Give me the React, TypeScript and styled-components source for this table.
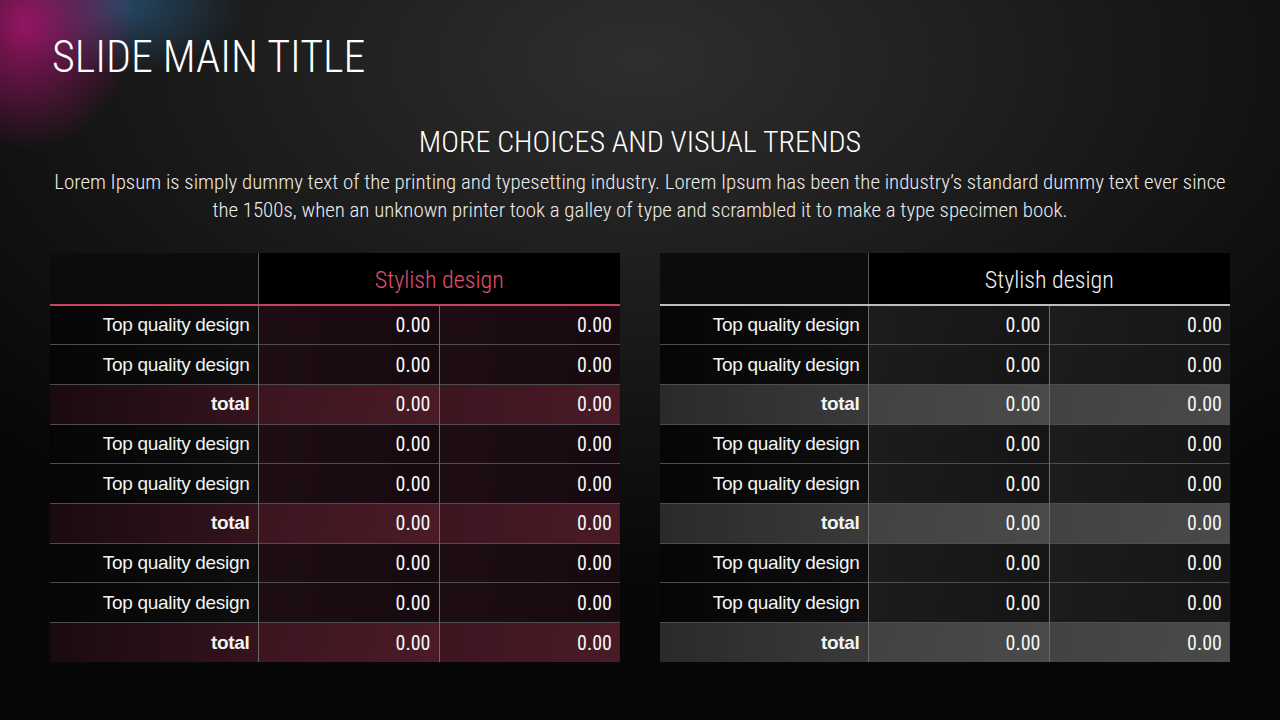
import styled, { createGlobalStyle } from 'styled-components';

type Variant = 'pink' | 'grey';
type RowKind = 'item' | 'total';

const rows: RowKind[] = [
  'item',
  'item',
  'total',
  'item',
  'item',
  'total',
  'item',
  'item',
  'total',
];

const GlobalStyle = createGlobalStyle`
  html, body {
    margin: 0;
    padding: 0;
    background: #050505;
  }
  * {
    box-sizing: border-box;
  }
`;

const condensed = `'Roboto Condensed', 'Roboto', sans-serif`;

const Slide = styled.div`
  position: relative;
  width: 1280px;
  height: 720px;
  overflow: hidden;
  color: #f2f2f2;
  background:
    radial-gradient(ellipse 110px 125px at 25px 25px, rgba(170, 20, 110, 0.85), rgba(170, 20, 110, 0) 100%),
    radial-gradient(ellipse 125px 70px at 120px 5px, rgba(40, 85, 120, 0.8), rgba(40, 85, 120, 0) 100%),
    radial-gradient(ellipse 900px 520px at 640px 60px, #2e2e2e 0%, #1c1c1c 45%, #070707 100%);
`;

const Title = styled.h1`
  margin: 0;
  padding: 30px 0 0 52px;
  font-family: ${condensed};
  font-stretch: condensed;
  font-weight: 300;
  font-size: 44px;
  line-height: 54px;
  color: #ffffff;
`;

const Intro = styled.section`
  display: flex;
  flex-direction: column;
  align-items: center;
  padding: 40px 20px 0;
  text-align: center;
`;

const Subtitle = styled.h2`
  margin: 0;
  font-family: ${condensed};
  font-stretch: condensed;
  font-weight: 300;
  font-size: 30px;
  line-height: 36px;
  color: #ffffff;
`;

const Body = styled.p`
  margin: 8px 0 0;
  font-family: ${condensed};
  font-stretch: condensed;
  font-weight: 300;
  font-size: 20.9px;
  line-height: 28px;
  color: #ececec;
  white-space: nowrap;
`;

const Tables = styled.div`
  display: flex;
  gap: 40px;
  padding: 29px 50px 0;
`;

const Table = styled.table`
  width: 570px;
  border-collapse: collapse;
  table-layout: fixed;
`;

const HeadBlank = styled.th`
  height: 52px;
  padding: 0;
  background: #0c0c0c;
  border-right: 1px solid #555;
`;

const HeadTitle = styled.th<{ $variant: Variant }>`
  height: 52px;
  padding: 3px 0 0;
  background: #000;
  font-family: ${condensed};
  font-stretch: condensed;
  font-weight: 300;
  font-size: 24px;
  color: ${(p) => (p.$variant === 'pink' ? '#e0506f' : '#f2f2f2')};
`;

const HeadRow = styled.tr<{ $variant: Variant }>`
  border-bottom: 2px solid
    ${(p) => (p.$variant === 'pink' ? '#c8435f' : '#bdbdbd')};
`;

const Row = styled.tr`
  height: 39.7px;
  border-bottom: 1px solid #4e4e4e;
  &:last-child {
    border-bottom: none;
  }
`;

const labelBg = (v: Variant, k: RowKind) => {
  if (k === 'item') return 'linear-gradient(90deg, #050505, #0e0e0e)';
  return v === 'pink'
    ? 'linear-gradient(90deg, #1a0a10, #35131d)'
    : 'linear-gradient(90deg, #2a2a2a, #3a3a3a)';
};

const valueBg = (v: Variant, k: RowKind) => {
  if (v === 'pink') {
    return k === 'total'
      ? 'linear-gradient(100deg, #3c1520, #4a1b27)'
      : 'linear-gradient(100deg, #1e0d14, #160a0f)';
  }
  return k === 'total'
    ? 'linear-gradient(100deg, #424242, #4a4a4a)'
    : 'linear-gradient(100deg, #1c1c1c, #151515)';
};

const Label = styled.td<{ $variant: Variant; $kind: RowKind }>`
  padding: 0 8px 0 0;
  text-align: right;
  font-family: 'Liberation Sans', Arial, sans-serif;
  font-size: 19px;
  font-weight: ${(p) => (p.$kind === 'total' ? 700 : 400)};
  letter-spacing: -0.3px;
  color: #f4f4f4;
  border-right: 1px solid #6a6a6a;
  background: ${(p) => labelBg(p.$variant, p.$kind)};
`;

const Value = styled.td<{ $variant: Variant; $kind: RowKind }>`
  padding: 0 8px 0 0;
  text-align: right;
  font-family: ${condensed};
  font-stretch: condensed;
  font-weight: 400;
  font-size: 20px;
  color: #f6f6f6;
  background: ${(p) => valueBg(p.$variant, p.$kind)};
  & + & {
    border-left: 1px solid #6a6a6a;
  }
`;

function DataTable({ variant }: { variant: Variant }) {
  return (
    <Table>
      <colgroup>
        <col style={{ width: 208 }} />
        <col style={{ width: 181 }} />
        <col style={{ width: 181 }} />
      </colgroup>
      <thead>
        <HeadRow $variant={variant}>
          <HeadBlank />
          <HeadTitle $variant={variant} colSpan={2}>
            Stylish design
          </HeadTitle>
        </HeadRow>
      </thead>
      <tbody>
        {rows.map((kind, i) => (
          <Row key={i}>
            <Label $variant={variant} $kind={kind}>
              {kind === 'total' ? 'total' : 'Top quality design'}
            </Label>
            <Value $variant={variant} $kind={kind}>
              0.00
            </Value>
            <Value $variant={variant} $kind={kind}>
              0.00
            </Value>
          </Row>
        ))}
      </tbody>
    </Table>
  );
}

export default function App() {
  return (
    <>
      <GlobalStyle />
      <Slide>
        <Title>SLIDE MAIN TITLE</Title>
        <Intro>
          <Subtitle>MORE CHOICES AND VISUAL TRENDS</Subtitle>
          <Body>
            Lorem Ipsum is simply dummy text of the printing and typesetting
            industry. Lorem Ipsum has been the industry’s standard dummy text
            ever since
            <br />
            the 1500s, when an unknown printer took a galley of type and
            scrambled it to make a type specimen book.
          </Body>
        </Intro>
        <Tables>
          <DataTable variant="pink" />
          <DataTable variant="grey" />
        </Tables>
      </Slide>
    </>
  );
}
